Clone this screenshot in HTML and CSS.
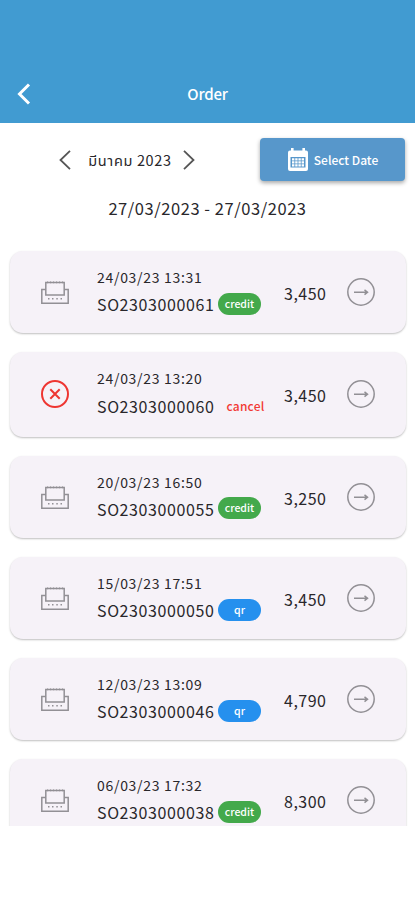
FILE: index.html
```
<!DOCTYPE html>
<html lang="th">
<head>
  <meta charset="UTF-8">
  <meta name="viewport" content="width=device-width, initial-scale=1.0">
  <title>Order</title>
  <link rel="stylesheet" href="styles.css">
</head>
<body>
  <!-- shared icons -->
  <svg class="sprite">
    <symbol id="printer" viewBox="0 0 28 24">
      <path d="M5 8.500H.8v13.800h26.400V8.500H23"/>
      <rect x="4.800" y="1.500" width="18.400" height="12.500"/>
      <path d="M6 .8l1.300 1M9 .8l1.300 1M12 .8l1.300 1M15 .8l1.300 1M18 .8l1.300 1M21 .8l1.300 1"/>
      <path d="M7 17.800h1.500M11 17.800h1.500M15.300 17.800h1.500M19.500 17.800h1.500"/>
    </symbol>
    <symbol id="go" viewBox="0 0 28 28">
      <circle cx="14" cy="14" r="13.2"/>
      <path d="M7 14.2h13.5M17.5 11.8l3 2.4-3 2.4"/>
    </symbol>
    <symbol id="cancel" viewBox="0 0 28 28">
      <circle cx="14" cy="14" r="13"/>
      <path d="M9.3 9.3l9.4 9.4M18.7 9.3l-9.4 9.4"/>
    </symbol>
  </svg>

  <header class="app-bar">
    <svg class="back" viewBox="0 0 14 22"><path d="M12 1.5L2.5 11l9.5 9.5"/></svg>
    <h1>Order</h1>
  </header>

  <div class="filter">
    <div class="month">
      <svg class="arrow" viewBox="0 0 12 20"><path d="M11 .8L1.5 10l9.5 9.2"/></svg>
      <span class="month-name">มีนาคม 2023</span>
      <svg class="arrow" viewBox="0 0 12 20"><path d="M1 .8l9.5 9.2L1 19.2"/></svg>
    </div>
    <button class="select-date">
      <svg class="calendar" viewBox="0 0 20 23">
        <path fill="#fff" fill-rule="evenodd" d="M2 2.5h1V0h2.6v2.5h8.8V0H17v2.5h1a2 2 0 0 1 2 2V21a2 2 0 0 1-2 2H2a2 2 0 0 1-2-2V4.500a2 2 0 0 1 2-2zM2.500 9v10.500h15V9z"/>
        <path fill="#fff" d="M4 10.200h2.400v2.200H4zM7.200 10.200h2.400v2.200H7.200zM10.400 10.200h2.400v2.200h-2.400zM13.600 10.200H16v2.200h-2.400zM4 13.200h2.400v2.200H4zM7.200 13.200h2.400v2.200H7.200zM10.400 13.200h2.400v2.200h-2.400zM13.600 13.200H16v2.200h-2.400zM4 16.200h2.400v2.200H4zM7.200 16.200h2.400v2.200H7.200zM10.400 16.200h2.400v2.200h-2.400zM13.600 16.200H16v2.200h-2.400z"/>
      </svg>
      <span>Select Date</span>
    </button>
  </div>
  <p class="range">27/03/2023 - 27/03/2023</p>

  <main class="orders">
    <div class="order">
      <svg class="status"><use href="#printer"/></svg>
      <div class="info">
        <div class="date">24/03/23 13:31</div>
        <div class="line"><span class="code">SO2303000061</span><span class="badge credit">credit</span></div>
      </div>
      <div class="price">3,450</div>
      <svg class="go"><use href="#go"/></svg>
    </div>
    <div class="order cancelled">
      <svg class="status"><use href="#cancel"/></svg>
      <div class="info">
        <div class="date">24/03/23 13:20</div>
        <div class="line"><span class="code">SO2303000060</span><span class="badge cancel">cancel</span></div>
      </div>
      <div class="price">3,450</div>
      <svg class="go"><use href="#go"/></svg>
    </div>
    <div class="order">
      <svg class="status"><use href="#printer"/></svg>
      <div class="info">
        <div class="date">20/03/23 16:50</div>
        <div class="line"><span class="code">SO2303000055</span><span class="badge credit">credit</span></div>
      </div>
      <div class="price">3,250</div>
      <svg class="go"><use href="#go"/></svg>
    </div>
    <div class="order">
      <svg class="status"><use href="#printer"/></svg>
      <div class="info">
        <div class="date">15/03/23 17:51</div>
        <div class="line"><span class="code">SO2303000050</span><span class="badge qr">qr</span></div>
      </div>
      <div class="price">3,450</div>
      <svg class="go"><use href="#go"/></svg>
    </div>
    <div class="order">
      <svg class="status"><use href="#printer"/></svg>
      <div class="info">
        <div class="date">12/03/23 13:09</div>
        <div class="line"><span class="code">SO2303000046</span><span class="badge qr">qr</span></div>
      </div>
      <div class="price">4,790</div>
      <svg class="go"><use href="#go"/></svg>
    </div>
    <div class="order">
      <svg class="status"><use href="#printer"/></svg>
      <div class="info">
        <div class="date">06/03/23 17:32</div>
        <div class="line"><span class="code">SO2303000038</span><span class="badge credit">credit</span></div>
      </div>
      <div class="price">8,300</div>
      <svg class="go"><use href="#go"/></svg>
    </div>
  </main>
</body>
</html>
```
FILE: styles.css
```
* {
  margin: 0;
  padding: 0;
  box-sizing: border-box;
}

body {
  height: 900px;
  background: #fff;
  color: #29272b;
  font-family: "Noto Sans CJK SC", "Noto Sans Thai", "Noto Sans", sans-serif;
  overflow: hidden;
}

svg {
  display: block;
  flex: none;
  fill: none;
}

.sprite {
  display: none;
}

.app-bar {
  height: 123px;
  padding: 65px 17px 0;
  display: grid;
  grid-template-columns: 14px 1fr 14px;
  align-items: center;
  background: #419bd1;
}

.back {
  width: 14px;
  height: 22px;
  stroke: #fff;
  stroke-width: 3;
}

.app-bar h1 {
  color: #fff;
  font-size: 15px;
  font-weight: 500;
  letter-spacing: -0.2px;
  line-height: 24px;
  text-align: center;
}

.filter {
  display: flex;
  justify-content: space-between;
  padding: 15px 10px 0 59px;
}

.month {
  display: flex;
  align-items: center;
  height: 43px;
}

.month-name {
  width: 112px;
  padding-left: 6px;
  font-size: 14.5px;
  letter-spacing: 0.65px;
  line-height: 20px;
  text-align: center;
  white-space: nowrap;
}

.arrow {
  width: 12px;
  height: 20px;
  stroke: #555;
  stroke-width: 1.8;
}

.select-date {
  display: flex;
  align-items: center;
  justify-content: center;
  gap: 6px;
  width: 145px;
  height: 43px;
  padding-left: 1px;
  border: 0;
  border-radius: 4px;
  background: #5797cb;
  box-shadow: 0 2px 4px rgba(0, 0, 0, 0.35);
  color: #fff;
  font-family: inherit;
  font-size: 12px;
  font-weight: 500;
  line-height: 18px;
}

.calendar {
  width: 20px;
  height: 23px;
}

.range {
  margin-top: 15px;
  font-size: 16.5px;
  letter-spacing: 0.55px;
  line-height: 24px;
  text-align: center;
}

.orders {
  height: 592px;
  margin-top: 14px;
  padding: 17px 9px 0 10px;
  overflow: hidden;
}

.order {
  display: flex;
  align-items: center;
  height: 82px;
  margin-bottom: 19.200px;
  padding: 0 31px;
  border-radius: 13px;
  background: #f6f2f8;
  box-shadow: 0 1px 2px rgba(0, 0, 0, 0.25);
}

.status {
  width: 28px;
  height: 24px;
  margin-top: 2px;
  stroke: #929095;
  stroke-width: 1.5;
}

.info {
  width: 164px;
  margin-left: 28px;
  padding-top: 1px;
}

.date {
  font-size: 14px;
  letter-spacing: 0.7px;
  line-height: 22px;
}

.line {
  display: flex;
  align-items: center;
  height: 31px;
}

.code {
  width: 121px;
  padding-top: 1px;
  font-size: 16px;
  letter-spacing: 0.6px;
}

.badge {
  width: 43px;
  height: 22px;
  border-radius: 11px;
  color: #fff;
  font-size: 10.5px;
  font-weight: 500;
  line-height: 21px;
  text-align: center;
}

.credit {
  background: #43a94b;
}

.qr {
  background: #2590ee;
}

.cancel {
  width: 55px;
  flex: none;
  color: #f23a35;
  font-size: 12px;
  letter-spacing: 0.2px;
}

.price {
  width: 64px;
  margin-left: 22px;
  padding: 2px 0 0 1px;
  font-size: 16px;
  letter-spacing: 0.5px;
  line-height: 24px;
}

.go {
  width: 28px;
  height: 28px;
  stroke: #929095;
  stroke-width: 1.5;
}

.cancelled {
  height: 84.5px;
}

.cancelled .line {
  height: 34px;
}

/* plain text label, wider than the pills */
.cancelled .code {
  width: 121px;
  flex: none;
}

.cancelled .status {
  height: 28px;
  margin-top: 0;
  stroke: #ee3632;
  stroke-width: 2;
}
```
